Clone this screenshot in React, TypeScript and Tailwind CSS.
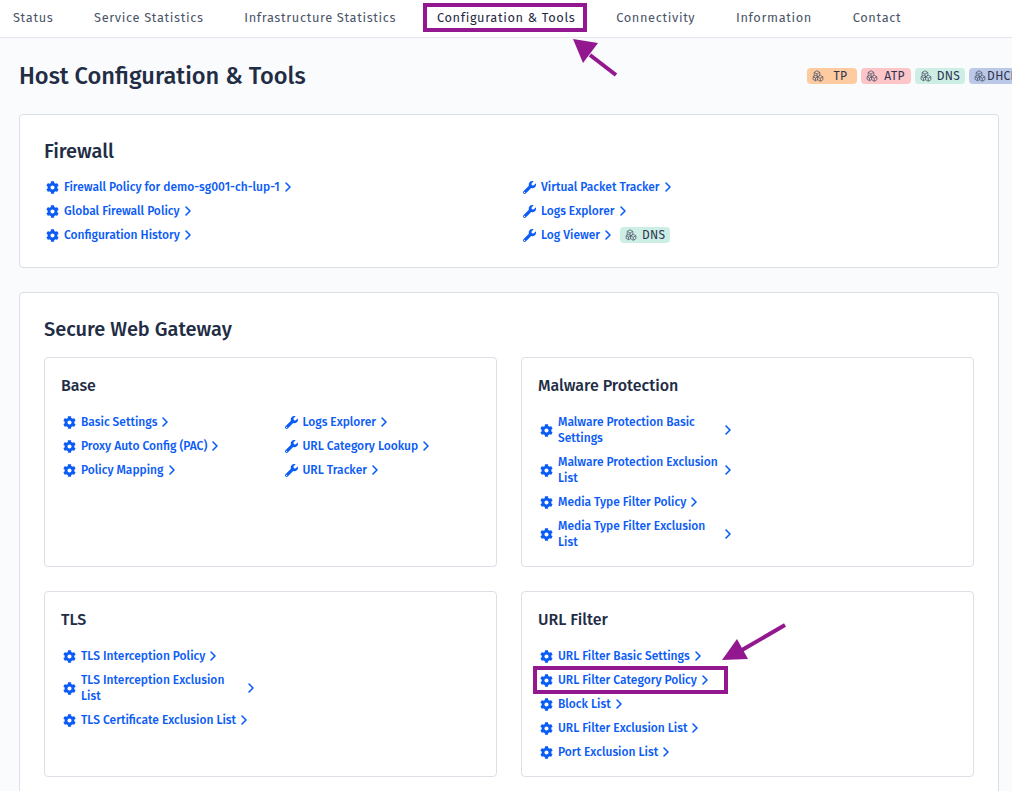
import { ChevronRight } from 'lucide-react';
import { FaCog, FaWrench } from 'react-icons/fa';

const NAV = ['Status', 'Service Statistics', 'Infrastructure Statistics', 'Configuration & Tools', 'Connectivity', 'Information', 'Contact'];

const BADGES = [
  { label: 'TP', color: 'bg-[#fecba1]', fill: '#fecba1' },
  { label: 'ATP', color: 'bg-[#fec5c9]', fill: '#fec5c9' },
  { label: 'DNS', color: 'bg-[#cdeee5]', fill: '#cdeee5' },
  { label: 'DHCP', color: 'bg-[#bcc8e8]', fill: '#bcc8e8' },
];

type Item = { label: string; icon: 'cog' | 'wrench'; boxed?: boolean; dns?: boolean };

const cog = (label: string, boxed = false): Item => ({ label, icon: 'cog', boxed });
const wrench = (label: string, dns = false): Item => ({ label, icon: 'wrench', dns });

// isometric cube: hexagon outline plus the inner Y
function cube(cx: number, cy: number, r: number) {
  const x = 0.87 * r;
  const y = 0.5 * r;
  return `M${cx} ${cy - r}L${cx + x} ${cy - y}V${cy + y}L${cx} ${cy + r}L${cx - x} ${cy + y}V${cy - y}ZM${cx - x} ${cy - y}L${cx} ${cy}L${cx + x} ${cy - y}M${cx} ${cy}V${cy + r}`;
}

function CubesIcon({ fill }: { fill: string }) {
  return (
    <svg width="12" height="12" viewBox="0 0 24 24" stroke="#4a5468" strokeWidth="1.5" strokeLinejoin="round" className="shrink-0">
      <path d={cube(10, 8, 6.5)} fill={fill} />
      <path d={cube(7, 16, 5.5)} fill={fill} />
      <path d={cube(16.5, 16.5, 6)} fill={fill} />
    </svg>
  );
}

function Badge({ label, color, fill }: { label: string; color: string; fill: string }) {
  return (
    <span className={`flex h-4 w-[50px] shrink-0 items-center rounded-sm pl-[5px] text-xs leading-4 text-[#2b3550] ${color}`}>
      <CubesIcon fill={fill} />
      <span className="flex-1 whitespace-nowrap text-center tracking-wide">{label}</span>
    </span>
  );
}

function LinkRow({ item }: { item: Item }) {
  const row = (
    <a className="flex items-center py-1 text-[#0b5bf5]">
      {item.icon === 'cog' ? (
        <FaCog size={13} className="mr-[5px] ml-[2px] shrink-0" />
      ) : (
        <FaWrench size={13} className="mr-[5px] ml-[2px] shrink-0" />
      )}
      <span className="text-xs leading-4 font-medium">{item.label}</span>
      <ChevronRight size={16} strokeWidth={2.4} className="shrink-0" />
      {item.dns && (
        <span className="ml-1">
          <Badge label="DNS" color="bg-[#cdeee5]" fill="#cdeee5" />
        </span>
      )}
    </a>
  );
  if (!item.boxed) return <li className="flex">{row}</li>;
  return (
    <li className="relative flex">
      {row}
      <span className="pointer-events-none absolute top-[-2px] bottom-[-2px] left-[-5px] w-[195px] border-4 border-[#93188f]" />
      <svg className="absolute top-[-48px] left-[178px]" width="74" height="44" viewBox="0 0 74 44">
        <path d="M26 30 L69 5" stroke="#93188f" strokeWidth="4" fill="none" />
        <path d="M6 40 L21 19 L32 39 Z" fill="#93188f" />
      </svg>
    </li>
  );
}

function Links({ items }: { items: Item[] }) {
  return (
    <ul>
      {items.map((item) => (
        <LinkRow key={item.label} item={item} />
      ))}
    </ul>
  );
}

function SubCard({ title, columns, className }: { title: string; columns: Item[][]; className: string }) {
  return (
    <div className={`rounded border border-[#dcdfe6] bg-white px-4 pt-4 ${className}`}>
      <h3 className="text-base leading-6 font-medium text-[#222d45]">{title}</h3>
      <div className="mt-3 grid grid-cols-2 gap-x-6">
        {columns.map((col, i) => (
          <Links key={i} items={col} />
        ))}
      </div>
    </div>
  );
}

export default function App() {
  return (
    <div className="h-[791px] overflow-hidden bg-[#fafbfd] font-['Fira_Sans','Noto_Sans',sans-serif]">
      <nav className="flex h-[38px] items-center gap-[40.7px] border-b border-[#e3e5ea] bg-white pb-[2px] pl-[13px]">
        {NAV.map((n, i) => (
          <a
            key={n}
            className={`relative whitespace-nowrap text-[12.8px] leading-5 tracking-wider ${i === 3 ? 'text-[#1f2a44]' : 'text-[#4a5468]'}`}
          >
            {n}
            {i === 3 && (
              <>
                <span className="absolute top-[-5px] right-[-12px] bottom-[-4px] left-[-14px] border-4 border-[#93188f]" />
                <svg className="absolute top-[28px] left-[133px]" width="50" height="42" viewBox="0 0 50 42">
                  <path d="M20 19 L46 39" stroke="#93188f" strokeWidth="4" fill="none" />
                  <path d="M3 3 L28 7 L13 27 Z" fill="#93188f" />
                </svg>
              </>
            )}
          </a>
        ))}
      </nav>

      <div className="flex items-center justify-between pt-[22px] pl-[19px]">
        <h1 className="text-[23.6px] leading-8 font-medium whitespace-nowrap text-[#222d45]">Host Configuration &amp; Tools</h1>
        <div className="flex w-[205px] shrink-0 gap-1 overflow-hidden">
          {BADGES.map((b) => (
            <Badge key={b.label} label={b.label} color={b.color} fill={b.fill} />
          ))}
        </div>
      </div>

      <div className="mx-[19px] mt-[22px] flex h-[154px] w-[980px] flex-col rounded border border-[#dcdfe6] bg-white px-6 pt-6">
        <h2 className="text-xl leading-6 font-medium text-[#222d45]">Firewall</h2>
        <div className="mt-3 grid grid-cols-2 gap-x-6">
          <Links items={[cog('Firewall Policy for demo-sg001-ch-lup-1'), cog('Global Firewall Policy'), cog('Configuration History')]} />
          <Links items={[wrench('Virtual Packet Tracker'), wrench('Logs Explorer'), wrench('Log Viewer', true)]} />
        </div>
      </div>

      <div className="mx-[19px] mt-6 w-[980px] rounded border border-[#dcdfe6] bg-white px-6 pt-6 pb-6">
        <h2 className="text-xl leading-6 font-medium text-[#222d45]">Secure Web Gateway</h2>
        <div className="mt-4 grid grid-cols-2 gap-6">
          <SubCard
            title="Base"
            className="h-[210px]"
            columns={[
              [cog('Basic Settings'), cog('Proxy Auto Config (PAC)'), cog('Policy Mapping')],
              [wrench('Logs Explorer'), wrench('URL Category Lookup'), wrench('URL Tracker')],
            ]}
          />
          <SubCard
            title="Malware Protection"
            className="h-[210px]"
            columns={[[cog('Malware Protection Basic Settings'), cog('Malware Protection Exclusion List'), cog('Media Type Filter Policy'), cog('Media Type Filter Exclusion List')], []]}
          />
          <SubCard
            title="TLS"
            className="h-[186px]"
            columns={[[cog('TLS Interception Policy'), cog('TLS Interception Exclusion List'), cog('TLS Certificate Exclusion List')], []]}
          />
          <SubCard
            title="URL Filter"
            className="h-[186px]"
            columns={[[cog('URL Filter Basic Settings'), cog('URL Filter Category Policy', true), cog('Block List'), cog('URL Filter Exclusion List'), cog('Port Exclusion List')], []]}
          />
        </div>
      </div>
    </div>
  );
}
